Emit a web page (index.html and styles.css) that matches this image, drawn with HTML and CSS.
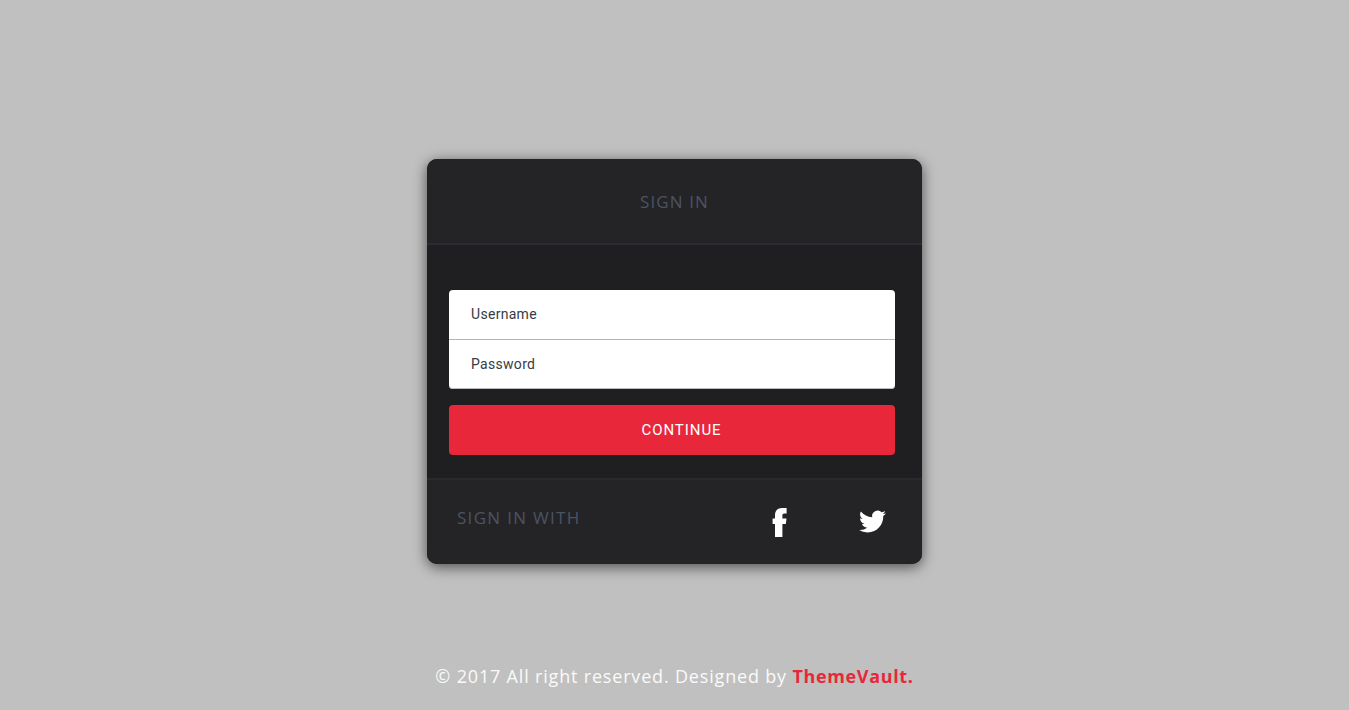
FILE: index.html
```html
<!DOCTYPE html>
<html lang="en">
<head>
<meta charset="utf-8">
<title>Sign in</title>
<link rel="stylesheet" href="styles.css">
</head>
<body>
<main class="card">
  <header class="card-head">SIGN IN</header>
  <form class="card-body">
    <div class="fields">
      <div class="field">Username</div>
      <div class="field">Password</div>
    </div>
    <div class="submit">CONTINUE</div>
  </form>
  <footer class="card-foot">
    <span class="with">SIGN IN WITH</span>
    <div class="socials">
      <svg class="fb" viewBox="0 0 15 29" aria-hidden="true"><path d="M10.4 29H3V16H.6v-5.6H3V7.6C3 2.6 5.6 0 10 0h4.6v5.6h-2.3c-1.4 0-1.9.7-1.9 2v2.8h4.1l-.7 5.6h-3.4z"/></svg>
      <svg class="tw" viewBox="0 0 24 24" aria-hidden="true"><path d="M23.953 4.57a10 10 0 01-2.825.775 4.958 4.958 0 002.163-2.723c-.951.555-2.005.959-3.127 1.184a4.92 4.92 0 00-8.384 4.482C7.69 8.095 4.067 6.13 1.64 3.162a4.822 4.822 0 00-.666 2.475c0 1.71.87 3.213 2.188 4.096a4.904 4.904 0 01-2.228-.616v.06a4.923 4.923 0 003.946 4.827 4.996 4.996 0 01-2.212.085 4.936 4.936 0 004.604 3.417 9.867 9.867 0 01-6.102 2.105c-.39 0-.779-.023-1.17-.067a13.995 13.995 0 007.557 2.209c9.053 0 13.998-7.496 13.998-13.985 0-.21 0-.42-.015-.63A9.935 9.935 0 0024 4.59z"/></svg>
    </div>
  </footer>
</main>
<p class="copy">© 2017 All right reserved. Designed by <strong class="brand">ThemeVault.</strong></p>
</body>
</html>
```
FILE: styles.css
```css
* { box-sizing: border-box; }
html, body { height: 100%; }
body {
  margin: 0;
  height: 710px;
  overflow: hidden;
  background: #c0c0c0;
  display: flex;
  flex-direction: column;
  align-items: center;
  padding-top: 159px;
  font-family: "Open Sans", sans-serif;
}
.card {
  width: 495px;
  height: 405px;
  background: #1f1f22;
  border-radius: 10px;
  box-shadow: 0 3px 14px rgba(0, 0, 0, .6);
  display: flex;
  flex-direction: column;
  overflow: hidden;
}
.card-head {
  height: 86px;
  flex: none;
  background: #242427;
  border-bottom: 2px solid #2b2b35;
  display: flex;
  align-items: center;
  justify-content: center;
  color: #4b5362;
  font-size: 17px;
  letter-spacing: 1.1px;
}
.card-body {
  height: 233px;
  flex: none;
  padding: 45px 27px 0 22px;
  display: flex;
  flex-direction: column;
  gap: 16px;
}
.fields {
  background: #fff;
  border-radius: 4px;
  font-family: Roboto, sans-serif;
  font-size: 14px;
  letter-spacing: .3px;
  color: #363b46;
  box-shadow: inset 0 -1px 0 #b9bcc4;
}
.field {
  height: 49.5px;
  padding-left: 22px;
  display: flex;
  align-items: center;
}
.field:first-child { height: 49px; padding-bottom: 1px; }
.field + .field { height: 50px; border-top: 1px solid #b5b5b5; padding-bottom: 1px; }
.submit {
  height: 50px;
  background: #e8273b;
  border-radius: 4px;
  color: #fff;
  font-family: Roboto, sans-serif;
  font-size: 15px;
  font-weight: 400;
  letter-spacing: .95px;
  display: flex;
  align-items: center;
  justify-content: center;
  padding-left: 19px;
}
.card-foot {
  flex: 1;
  background: #242427;
  border-top: 2px solid #2a2a2e;
  display: flex;
  align-items: center;
  justify-content: space-between;
  padding: 0 36px 0 30px;
}
.with {
  color: #4b5362;
  font-size: 17px;
  letter-spacing: 1.3px;
  margin-bottom: 9px;
}
.socials {
  display: flex;
  align-items: center;
  gap: 72px;
  fill: #fff;
}
.fb { width: 15px; height: 29px; display: block; }
.tw { width: 27px; height: 27px; display: block; margin-bottom: 2px; }
.copy {
  margin: 99px 0 0;
  color: #fafafa;
  font-size: 18px;
  letter-spacing: .82px;
  line-height: 26px;
}
.brand { color: #e8273b; font-weight: 700; letter-spacing: .65px; }
```
